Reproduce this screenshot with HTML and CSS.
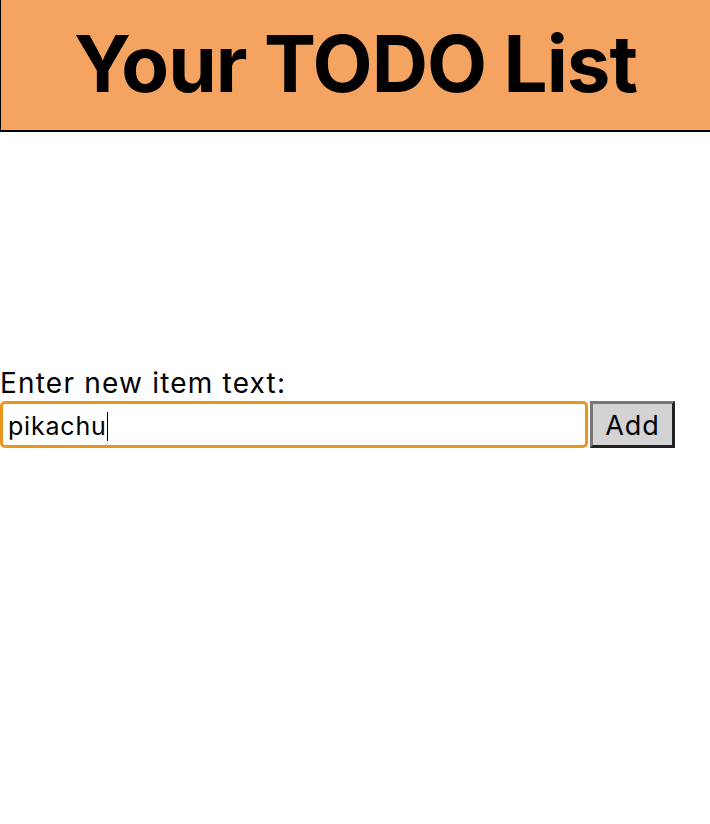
FILE: index.html
```html
<!DOCTYPE html>
<html>
<head>
<meta charset="utf-8">
<link rel="stylesheet" href="styles.css">
</head>
<body>
<header class="banner">
  <h1 class="title">Your TODO List</h1>
</header>
<main class="content">
  <form class="add-form">
    <label class="label" for="item">Enter new item text:</label>
    <div class="row">
      <div class="field"><span class="value">pikachu</span><span class="caret"></span></div>
      <button type="button" class="add-btn">Add</button>
    </div>
  </form>
</main>
</body>
</html>
```
FILE: styles.css
```css
html, body {
  margin: 0;
  padding: 0;
  background: #fff;
}
body {
  font-family: Inter, "Noto Sans", sans-serif;
  color: #000;
  overflow: hidden;
}
.banner {
  background: #f4a460;
  border-left: 1px solid #000;
  border-bottom: 2px solid #000;
  height: 130px;
  display: flex;
  align-items: center;
  justify-content: center;
}
.title {
  margin: 0;
  font-size: 78px;
  font-weight: 700;
  letter-spacing: -1px;
  line-height: 1;
  padding-bottom: 2px;
}
.content {
  padding-top: 235px;
}
.add-form {
  display: flex;
  flex-direction: column;
}
.label {
  font-size: 28px;
  letter-spacing: 1.2px;
  line-height: 32px;
  height: 34px;
}
.row {
  display: flex;
  align-items: stretch;
  gap: 2px;
}
.field {
  width: 577px;
  height: 38px;
  border: 3px solid #e8961e;
  border-radius: 5px;
  display: flex;
  align-items: center;
  padding: 3px 0 0 5px;
  font-size: 25px;
  letter-spacing: 0.8px;
  box-sizing: content-box;
}
.value {
  line-height: 1;
}
.caret {
  display: inline-block;
  width: 1.5px;
  height: 29px;
  background: #000;
  margin-left: 0;
}
.add-btn {
  font-family: Inter, "Noto Sans", sans-serif;
  font-size: 27px;
  letter-spacing: 1px;
  background: #d3d3d3;
  border-style: solid;
  border-width: 3px;
  border-color: #777 #222 #222 #777;
  padding: 2px 6px 0;
  width: 85px;
  height: 47px;
  color: #000;
}
```
